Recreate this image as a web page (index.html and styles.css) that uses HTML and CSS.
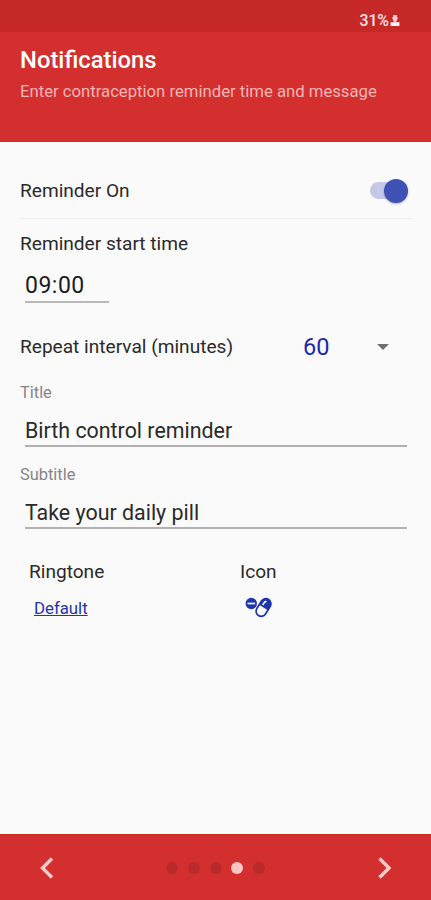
FILE: index.html
```html
<!DOCTYPE html>
<html lang="en">
<head>
<meta charset="utf-8">
<title>Notifications</title>
<link rel="stylesheet" href="styles.css">
</head>

<body>
<div class="status_bar">
  <span>31%</span>
  <svg class="battery" width="10" height="13" viewBox="0 0 10 13">
    <path d="M3 1h4v2l1 1-2 4h3.500v4h-9V8H4L2 4l1-1z" fill="#f9c9c9"/>
    <path d="M1 10.500h8" stroke="#fff" stroke-width="2.500"/>
  </svg>
</div>

<header class="header">
  <h1>Notifications</h1>
  <p>Enter contraception reminder time and message</p>
</header>

<main class="content">
  <div class="row reminder">
    <span class="label">Reminder On</span>
    <span class="switch"><span class="thumb"></span></span>
  </div>

  <div class="label label_start">Reminder start time</div>
  <div class="time">09:00</div>

  <div class="row repeat">
    <span class="label">Repeat interval (minutes)</span>
    <span class="interval">60</span>
    <svg width="12" height="6" viewBox="0 0 12 6"><path d="M0 0h12L6 6z" fill="#6f6f6f"/></svg>
  </div>

  <div class="caption">Title</div>
  <div class="field">Birth control reminder</div>
  <div class="caption">Subtitle</div>
  <div class="field">Take your daily pill</div>

  <div class="options">
    <div class="option">
      <div class="label">Ringtone</div>
      <a class="ringtone">Default</a>
    </div>
    <div class="option">
      <div class="label">Icon</div>
      <svg class="pills" width="28" height="22" viewBox="0 0 28 22">
        <circle cx="6.300" cy="6.500" r="5.700" fill="#1f35ae"/>
        <path d="M2.500 6.500h7.600" stroke="#e5e8fa" stroke-width="1.800"/>
        <g transform="rotate(32 18.500 10.500)">
          <rect x="13.400" y="1" width="10.200" height="19" rx="5.100" fill="#fafafa" stroke="#1f35ae" stroke-width="1.700"/>
          <path d="M13.400 10.500V6a5.100 5.100 0 0 1 10.200 0v4.500z" fill="#1f35ae"/>
          <path d="M16.500 8.800V6a2 2 0 0 1 1.500-2" fill="none" stroke="#fafafa" stroke-width="1.700"/>
        </g>
      </svg>
    </div>
  </div>
</main>

<footer class="footer">
  <svg width="14" height="22" viewBox="0 0 14 22"><path d="M13 1.500L3.500 11l9.500 9.500" fill="none" stroke="#fbcaca" stroke-width="3.400"/></svg>
  <div class="dots">
    <span class="dot"></span>
    <span class="dot"></span>
    <span class="dot"></span>
    <span class="dot active"></span>
    <span class="dot"></span>
  </div>
  <svg width="14" height="22" viewBox="0 0 14 22"><path d="M1.500 1.500L11 11l-9.500 9.500" fill="none" stroke="#fbcaca" stroke-width="3.400"/></svg>
</footer>
</body>
</html>
```

FILE: styles.css
```css
* {
  box-sizing: border-box;
}
body {
  display: flex;
  flex-direction: column;
  height: 900px;
  margin: 0;
  background: #fafafa;
  color: #2a2a2a;
  font-family: Roboto, sans-serif;
}
svg {
  display: block;
  flex: none;
}
.status_bar {
  display: flex;
  justify-content: flex-end;
  align-items: center;
  height: 32px;
  padding: 9px 31px 0 0;
  background: #c62828;
  color: #fde4e4;
  font-size: 15.8px;
  font-weight: 500;
}
.battery {
  margin-left: 1px;
}
.header {
  height: 110px;
  padding: 12px 20px 0;
  background: #d32f2f;
}
.header h1 {
  margin: 0;
  color: #fff;
  font-size: 23.8px;
  font-weight: 500;
  line-height: 32px;
}
.header p {
  margin: 4px 0 0;
  color: #f5b5b5;
  font-size: 16.7px;
  line-height: 24px;
  white-space: nowrap;
}
.content {
  flex: 1;
  padding: 0 18px 0 20px;
}
.row {
  display: flex;
  align-items: center;
}
.label {
  font-size: 19.1px;
  line-height: 24px;
  white-space: nowrap;
}
.reminder {
  justify-content: space-between;
  height: 77px;
  padding-top: 21px;
  border-bottom: 1px solid #ededed;
}
.switch {
  display: flex;
  justify-content: flex-end;
  align-items: center;
  width: 38px;
  height: 17px;
  margin-right: 5px;
  border-radius: 9px;
  background: #c5c8e8;
}
.thumb {
  flex: none;
  width: 24px;
  height: 24px;
  border-radius: 50%;
  background: #3f51b5;
  box-shadow: 0 1px 2px rgba(0, 0, 0, 0.3);
}
.label_start {
  margin-top: 13px;
}
.time {
  width: 84px;
  height: 39px;
  margin: 8px 0 0 5px;
  padding-top: 8px;
  border-bottom: 2px solid #b8b8b8;
  color: #1c1c1c;
  font-size: 23px;
  letter-spacing: 0.5px;
  line-height: 28px;
}
.repeat {
  height: 48px;
  margin-top: 20px;
}
.interval {
  width: 74px;
  margin-left: auto;
  color: #1a2bae;
  font-size: 23.5px;
}
.repeat svg {
  margin-right: 24px;
}
.caption {
  margin-top: 12px;
  color: #858585;
  font-size: 16.4px;
  line-height: 20px;
}
.field {
  height: 44px;
  margin: 0 6px 0 5px;
  padding-top: 14px;
  border-bottom: 2px solid #b0b0b0;
  font-size: 21.4px;
  line-height: 28px;
}
.caption + .field + .caption {
  margin-top: 18px;
}
.options {
  display: grid;
  grid-template-columns: 211px 1fr;
  margin: 31px 0 0 9px;
}
.ringtone {
  display: inline-block;
  margin: 13px 0 0 5px;
  color: #1f35ae;
  font-size: 16.8px;
  line-height: 22px;
  text-decoration: underline;
}
.pills {
  margin: 13px 0 0 5px;
}
.footer {
  display: flex;
  justify-content: space-between;
  align-items: center;
  height: 66px;
  padding: 1px 39px 0;
  border-top: 1px solid #c9302c;
  background: #d32f2f;
}
.dots {
  display: flex;
  gap: 9.6px;
}
.dot {
  width: 12px;
  height: 12px;
  border-radius: 50%;
  background: #b92a2a;
}
.dot.active {
  background: #f9c5c5;
}
```
